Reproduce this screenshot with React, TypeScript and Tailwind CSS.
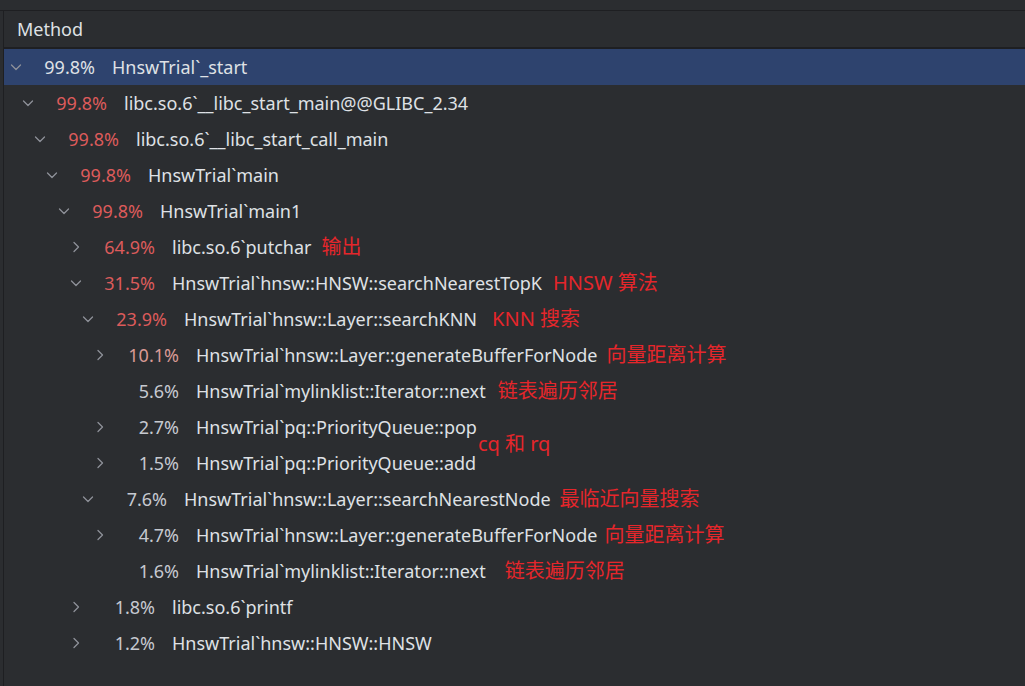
import type { ReactNode } from "react";

type Row = {
  level: number;
  pct: string;
  name: string;
  state: "open" | "closed" | "leaf";
  tone: "hot" | "warm" | "cool";
  note?: string;
  noteGap?: string;
  floatNote?: string;
};

const ROWS: Row[] = [
  { level: 0, pct: "99.8%", name: "HnswTrial`_start", state: "open", tone: "hot" },
  { level: 1, pct: "99.8%", name: "libc.so.6`__libc_start_main@@GLIBC_2.34", state: "open", tone: "hot" },
  { level: 2, pct: "99.8%", name: "libc.so.6`__libc_start_call_main", state: "open", tone: "hot" },
  { level: 3, pct: "99.8%", name: "HnswTrial`main", state: "open", tone: "hot" },
  { level: 4, pct: "99.8%", name: "HnswTrial`main1", state: "open", tone: "hot" },
  { level: 5, pct: "64.9%", name: "libc.so.6`putchar", state: "closed", tone: "hot", note: "输出", noteGap: "ml-[10px]" },
  { level: 5, pct: "31.5%", name: "HnswTrial`hnsw::HNSW::searchNearestTopK", state: "open", tone: "hot", note: "HNSW 算法", noteGap: "ml-[11px]" },
  { level: 6, pct: "23.9%", name: "HnswTrial`hnsw::Layer::searchKNN", state: "open", tone: "hot", note: "KNN 搜索", noteGap: "ml-[15px]" },
  { level: 7, pct: "10.1%", name: "HnswTrial`hnsw::Layer::generateBufferForNode", state: "closed", tone: "warm", note: "向量距离计算", noteGap: "ml-[9px]" },
  { level: 7, pct: "5.6%", name: "HnswTrial`mylinklist::Iterator::next", state: "leaf", tone: "cool", note: "链表遍历邻居", noteGap: "ml-[12px]" },
  { level: 7, pct: "2.7%", name: "HnswTrial`pq::PriorityQueue::pop", state: "closed", tone: "cool", floatNote: "cq 和 rq" },
  { level: 7, pct: "1.5%", name: "HnswTrial`pq::PriorityQueue::add", state: "closed", tone: "cool" },
  { level: 6, pct: "7.6%", name: "HnswTrial`hnsw::Layer::searchNearestNode", state: "open", tone: "cool", note: "最临近向量搜索", noteGap: "ml-[9px]" },
  { level: 7, pct: "4.7%", name: "HnswTrial`hnsw::Layer::generateBufferForNode", state: "closed", tone: "cool", note: "向量距离计算", noteGap: "ml-[7px]" },
  { level: 7, pct: "1.6%", name: "HnswTrial`mylinklist::Iterator::next", state: "leaf", tone: "cool", note: "链表遍历邻居", noteGap: "ml-[19px]" },
  { level: 5, pct: "1.8%", name: "libc.so.6`printf", state: "closed", tone: "cool" },
  { level: 5, pct: "1.2%", name: "HnswTrial`hnsw::HNSW::HNSW", state: "closed", tone: "cool" },
];

const INDENT = [
  "pl-[4px]",
  "pl-[16px]",
  "pl-[28px]",
  "pl-[40px]",
  "pl-[52px]",
  "pl-[64px]",
  "pl-[76px]",
  "pl-[88px]",
];

const TONE = {
  hot: "text-[#dc5b5b]",
  warm: "text-[#d99a95]",
  cool: "text-[#c6c9d0]",
};

function Chevron({ state }: { state: Row["state"] }) {
  if (state === "leaf") {
    return <span className="w-4 h-4 shrink-0" />;
  }
  return (
    <svg
      viewBox="0 0 16 16"
      className="w-4 h-4 shrink-0"
      fill="none"
      stroke="#8e9199"
      strokeWidth="1.3"
      strokeLinecap="round"
      strokeLinejoin="round"
    >
      {state === "open" ? <path d="M3.5 6l4.5 4.5L12.5 6" /> : <path d="M6 3.5l4.5 4.5L6 12.5" />}
    </svg>
  );
}

function Note({ children, className }: { children: ReactNode; className?: string }) {
  return (
    <span className={`text-[20px] leading-[28px] text-[#e5262b] whitespace-nowrap ${className ?? ""}`}>
      {children}
    </span>
  );
}

function TreeRow({ row, selected }: { row: Row; selected: boolean }) {
  return (
    <div
      className={`flex h-9 items-center ${INDENT[row.level]} ${selected ? "bg-[#2e436e]" : ""}`}
    >
      <Chevron state={row.state} />
      <span
        className={`ml-[15px] w-[56px] shrink-0 text-right ${selected ? "text-[#dfe1e5]" : TONE[row.tone]}`}
      >
        {row.pct}
      </span>
      <span className="ml-[17px] whitespace-nowrap text-[#dfe1e5]">{row.name}</span>
      {row.floatNote && (
        <span className="relative self-stretch">
          <Note className="absolute left-[1px] top-[21px]">{row.floatNote}</Note>
        </span>
      )}
      {row.note && <Note className={row.noteGap}>{row.note}</Note>}
    </div>
  );
}

export default function App() {
  return (
    <div
      className="flex h-[686px] w-full flex-col overflow-hidden bg-[#2b2d30] text-[18px]"
      style={{ fontFamily: '"Noto Sans", "Noto Sans CJK SC", sans-serif' }}
    >
      <div className="h-[10px] shrink-0" />
      <div className="flex flex-1 border-t border-[#1e1f22]">
        <div className="w-[3px] shrink-0" />
        <div className="flex flex-1 flex-col border-l border-[#1e1f22]">
          <div className="flex h-[38px] shrink-0 items-center border-b-2 border-[#1e1f22] pl-[13px] text-[#dfe1e5]">
            Method
          </div>
          <div className="flex flex-col">
            {ROWS.map((row, i) => (
              <TreeRow key={i} row={row} selected={i === 0} />
            ))}
          </div>
        </div>
      </div>
    </div>
  );
}
